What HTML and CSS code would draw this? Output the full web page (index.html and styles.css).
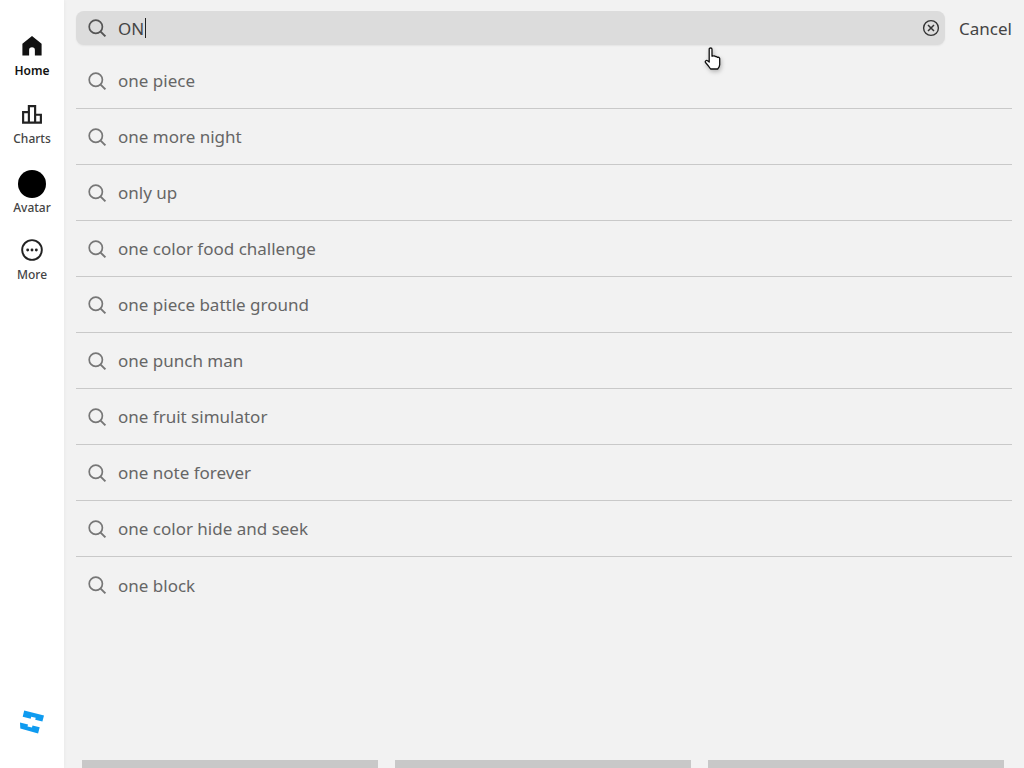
FILE: index.html
```html
<!DOCTYPE html>
<html lang="en">
<head>
<meta charset="utf-8">
<title>Search</title>
<link rel="stylesheet" href="styles.css">
</head>
<body>
<div class="app">
  <nav class="side">
    <a class="nav-item active">
      <svg class="nav-icon" viewBox="0 0 20 20"><path d="M10 1.6 2 8.2V18h5.6v-4.6a2.4 2.4 0 0 1 4.8 0V18H18V8.2z" fill="#111"/></svg>
      <span>Home</span>
    </a>
    <a class="nav-item">
      <svg class="nav-icon" viewBox="0 0 20 20"><path d="M7.4 17.2V3.4h5.2v13.8M7.4 17.2H2.6V8.4h4.8M12.6 17.2h4.8v-6.6h-4.8M2.6 17.2h14.8" fill="none" stroke="#222" stroke-width="1.8"/></svg>
      <span>Charts</span>
    </a>
    <a class="nav-item">
      <span class="avatar"></span>
      <span>Avatar</span>
    </a>
    <a class="nav-item">
      <svg class="nav-icon" viewBox="0 0 20 20"><circle cx="10" cy="10" r="8.2" fill="none" stroke="#222" stroke-width="1.6"/><circle cx="6.4" cy="10" r="1.2" fill="#222"/><circle cx="10" cy="10" r="1.2" fill="#222"/><circle cx="13.6" cy="10" r="1.2" fill="#222"/></svg>
      <span>More</span>
    </a>
    <svg class="logo" viewBox="0 0 26 26"><path d="M5.2 1.5 25 6.4l-1.6 6.2-7.2-1.8.5-2-4.5-1.1-.5 2-8-2zM1 13.4l8 2-.5 2 4.5 1.1.5-2 7.2 1.8-1.6 6.2L1.3 19.6z" fill="#0f9bf0"/></svg>
  </nav>
  <main class="main">
    <div class="search-row">
      <div class="search-box">
        <svg class="search-icon dark" viewBox="0 0 20 20"><circle cx="8.8" cy="8.8" r="6.6" fill="none" stroke="currentColor" stroke-width="1.7"/><path d="m13.6 13.6 4.8 4.8" fill="none" stroke="currentColor" stroke-width="2"/></svg>
        <span class="query">ON</span><span class="caret"></span>
        <svg class="clear" viewBox="0 0 18 18"><circle cx="9" cy="9" r="7.4" fill="none" stroke="#333" stroke-width="1.4"/><path d="m6 6 6 6m0-6-6 6" fill="none" stroke="#333" stroke-width="1.5"/></svg>
      </div>
      <span class="cancel">Cancel</span>
    </div>
    <ul class="results">
      <li class="result"><svg class="search-icon" viewBox="0 0 20 20"><circle cx="8.8" cy="8.8" r="6.6" fill="none" stroke="currentColor" stroke-width="1.7"/><path d="m13.6 13.6 4.8 4.8" fill="none" stroke="currentColor" stroke-width="2"/></svg>one piece</li>
      <li class="result"><svg class="search-icon" viewBox="0 0 20 20"><circle cx="8.8" cy="8.8" r="6.6" fill="none" stroke="currentColor" stroke-width="1.7"/><path d="m13.6 13.6 4.8 4.8" fill="none" stroke="currentColor" stroke-width="2"/></svg>one more night</li>
      <li class="result"><svg class="search-icon" viewBox="0 0 20 20"><circle cx="8.8" cy="8.8" r="6.6" fill="none" stroke="currentColor" stroke-width="1.7"/><path d="m13.6 13.6 4.8 4.8" fill="none" stroke="currentColor" stroke-width="2"/></svg>only up</li>
      <li class="result"><svg class="search-icon" viewBox="0 0 20 20"><circle cx="8.8" cy="8.8" r="6.6" fill="none" stroke="currentColor" stroke-width="1.7"/><path d="m13.6 13.6 4.8 4.8" fill="none" stroke="currentColor" stroke-width="2"/></svg>one color food challenge</li>
      <li class="result"><svg class="search-icon" viewBox="0 0 20 20"><circle cx="8.8" cy="8.8" r="6.6" fill="none" stroke="currentColor" stroke-width="1.7"/><path d="m13.6 13.6 4.8 4.8" fill="none" stroke="currentColor" stroke-width="2"/></svg>one piece battle ground</li>
      <li class="result"><svg class="search-icon" viewBox="0 0 20 20"><circle cx="8.8" cy="8.8" r="6.6" fill="none" stroke="currentColor" stroke-width="1.7"/><path d="m13.6 13.6 4.8 4.8" fill="none" stroke="currentColor" stroke-width="2"/></svg>one punch man</li>
      <li class="result"><svg class="search-icon" viewBox="0 0 20 20"><circle cx="8.8" cy="8.8" r="6.6" fill="none" stroke="currentColor" stroke-width="1.7"/><path d="m13.6 13.6 4.8 4.8" fill="none" stroke="currentColor" stroke-width="2"/></svg>one fruit simulator</li>
      <li class="result"><svg class="search-icon" viewBox="0 0 20 20"><circle cx="8.8" cy="8.8" r="6.6" fill="none" stroke="currentColor" stroke-width="1.7"/><path d="m13.6 13.6 4.8 4.8" fill="none" stroke="currentColor" stroke-width="2"/></svg>one note forever</li>
      <li class="result"><svg class="search-icon" viewBox="0 0 20 20"><circle cx="8.8" cy="8.8" r="6.6" fill="none" stroke="currentColor" stroke-width="1.7"/><path d="m13.6 13.6 4.8 4.8" fill="none" stroke="currentColor" stroke-width="2"/></svg>one color hide and seek</li>
      <li class="result last"><svg class="search-icon" viewBox="0 0 20 20"><circle cx="8.8" cy="8.8" r="6.6" fill="none" stroke="currentColor" stroke-width="1.7"/><path d="m13.6 13.6 4.8 4.8" fill="none" stroke="currentColor" stroke-width="2"/></svg>one block</li>
    </ul>
    <div class="tiles">
      <div class="tile"></div>
      <div class="tile"></div>
      <div class="tile"></div>
    </div>
  </main>
</div>
<svg class="cursor" viewBox="0 0 20 26"><path d="M6.2 2.2c0-1.6 2.8-1.6 2.8 0v7l1-.2c.8-.5 2 0 2.200.6.8-.4 1.900 0 2.200.8.900-.4 2.200.1 2.300 1.200v6.200c0 1.700-1 3-2 4.200H7.600c-1.400-2-2.900-4-4.900-6.200-1.200-1.400.500-3 1.900-2l1.600 1.300z" fill="#fff" stroke="#111" stroke-width="1.300" stroke-linejoin="round"/></svg>
</body>
</html>
```
FILE: styles.css
```css
* { box-sizing: border-box; }
html, body { margin: 0; height: 100%; overflow: hidden; }
body { font-family: "Noto Sans", "Open Sans", sans-serif; background: #f2f2f2; }
.app { display: flex; height: 768px; }
.side {
  width: 64px;
  flex: none;
  background: #fff;
  box-shadow: 0 0 4px rgba(0,0,0,.05);
  display: flex;
  flex-direction: column;
  align-items: center;
  padding-top: 34px;
  position: relative;
}
.nav-item {
  width: 64px;
  height: 68px;
  display: flex;
  flex-direction: column;
  align-items: center;
  font-size: 12px;
  line-height: 16px;
  font-weight: 500;
  color: #444;
}
.nav-item.active { color: #111; font-weight: 600; }
.nav-icon { width: 24px; height: 24px; display: block; margin-bottom: 5px; }
.avatar { width: 28px; height: 28px; border-radius: 50%; background: #000; margin-bottom: 2px; }
.logo { width: 26px; height: 26px; margin-top: auto; margin-bottom: 33px; }
.main { flex: 1; min-width: 0; padding: 11px 12px 0; display: flex; flex-direction: column; }
.search-row { display: flex; align-items: center; height: 34px; }
.search-box {
  width: 870px;
  height: 34px;
  background: #dcdcdc;
  border-radius: 8px;
  display: flex;
  align-items: center;
  padding: 0 5px 0 11px;
  color: #444;
  font-size: 17px;
  box-shadow: 0 1px 2px rgba(0,0,0,.06);
}
.query { color: #444; }
.caret { width: 1px; height: 20px; background: #222; margin-left: 1px; }
.clear { width: 18px; height: 18px; margin-left: auto; margin-right: 0; position: relative; right: 0; }
.search-box { padding-right: 5px; }
.cancel { margin-left: 14px; font-size: 17px; color: #444; }
.search-icon { width: 20px; height: 20px; flex: none; margin-right: 11px; color: #777; }
.search-icon.dark { color: #555; }
.results { list-style: none; margin: 8px 0 0; padding: 0; }
.result {
  height: 56px;
  display: flex;
  align-items: center;
  padding-left: 11px;
  font-size: 17px;
  color: #666;
  border-bottom: 1px solid #c9c9c9;
}
.result.last { border-bottom: 0; }
.tiles {
  margin-top: auto;
  height: 8px;
  padding: 0 7px 0 6px;
  display: grid;
  grid-template-columns: 296px 296px 296px;
  column-gap: 17px;
}
.tile { background: #c8c8c8; }
.cursor { position: absolute; left: 703px; top: 47px; width: 20px; height: 26px; filter: drop-shadow(1px 2px 2px rgba(0,0,0,.25)); }
```
